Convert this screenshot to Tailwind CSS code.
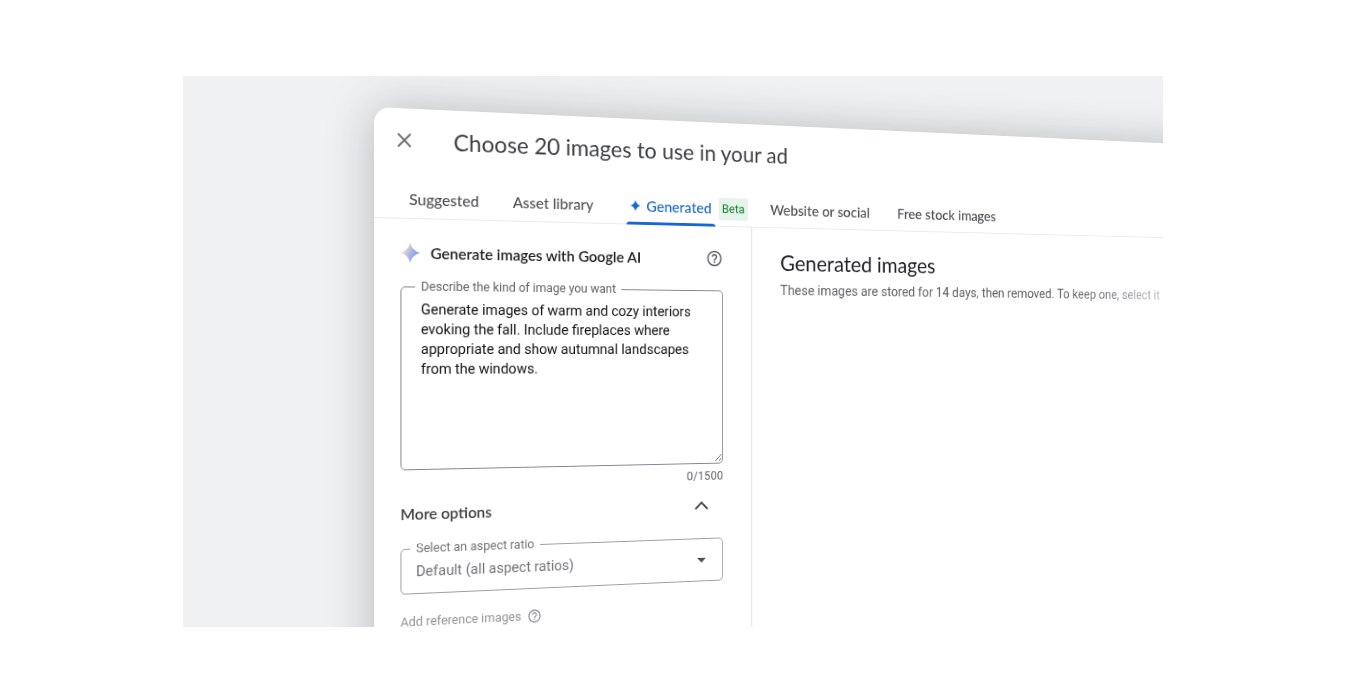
<!DOCTYPE html>
<html lang="en">
<head>
<meta charset="utf-8">
<meta name="viewport" content="width=device-width, initial-scale=1">
<title>Choose 20 images to use in your ad</title>
<script src="https://cdn.jsdelivr.net/npm/@tailwindcss/browser@4"></script>
</head>
<body class="bg-white py-[76px] pr-[195px] pl-[183px] font-[Roboto,sans-serif] text-[#3c4043]">
<main class="relative aspect-[980/551] overflow-hidden bg-[#eff1f3]">
  <!-- Perspective stage: the dialog recedes towards the right -->
  <div class="ml-[191px] pt-[31px] [perspective:952px] [perspective-origin:0_279px]">
    <section role="dialog" aria-labelledby="dialog-title" class="flex h-[640px] w-[130%] origin-top-left rotate-y-[10deg] flex-col rounded-[16px] bg-white shadow-[0_2px_48px_rgba(60,64,62,0.32)]">
      <header class="flex h-[66px] items-start gap-10 pt-[21px] pl-[20px]">
        <button type="button" aria-label="Close" class="flex size-[22px] items-center justify-center text-[#6b6f74]">
          <svg class="size-[16px]" viewBox="0 0 16 16" fill="none" stroke="currentColor" stroke-width="1.800"><path d="M1.500 1.500l13 13M14.500 1.500l-13 13"/></svg>
        </button>
        <h1 id="dialog-title" class="font-[Lato,sans-serif] text-[24px] leading-[22px] whitespace-nowrap">Choose 20 images to use in your ad</h1>
      </header>

      <nav class="flex h-[45px] shrink-0 items-stretch border-b border-[#e8eaed] pl-[36px] font-[Lato,sans-serif] text-[16px] font-medium whitespace-nowrap text-[#4c5055]">
        <a href="#suggested" class="mr-[36px] flex items-center pt-[5px]">Suggested</a>
        <a href="#library" class="mr-[37px] flex items-center pt-[5px]">Asset library</a>
        <a href="#generated" aria-current="page" class="relative flex items-center gap-[6px] px-1 pt-[5px] text-[#1967d2]">
          <svg class="size-[12px]" viewBox="0 0 12 12" fill="currentColor"><path d="M6 0.300Q7.200 4.800 11.700 6 7.200 7.200 6 11.700 4.800 7.200 0.300 6 4.800 4.800 6 0.300Z"/></svg>
          Generated
          <span class="absolute inset-x-0 -bottom-px h-[3px] rounded-t-[3px] bg-[#1967d2]"></span>
        </a>
        <span class="mt-[14px] ml-1 flex h-6 items-center rounded-xs bg-[#e6f4ea] px-1 font-[Roboto,sans-serif] text-[13px] font-normal text-[#188038]">Beta</span>
        <a href="#website" class="mr-[34px] ml-[26px] flex items-center pt-[5px]">Website or social</a>
        <a href="#stock" class="flex items-center pt-[5px]">Free stock images</a>
      </nav>

      <div class="flex grow">
        <form class="flex w-[413px] shrink-0 flex-col border-r border-[#dadce0] pr-[33px] pl-[27px]">
          <div class="mt-[22px] flex h-6 items-center">
            <svg class="size-[20px]" viewBox="0 0 20 20"><defs><linearGradient id="spark" x1="0" y1="0.2" x2="1" y2="0.7"><stop offset="0.15" stop-color="#fbe3ae"/><stop offset="0.45" stop-color="#b9bfe6"/><stop offset="1" stop-color="#6b8df2"/></linearGradient></defs><path fill="url(#spark)" d="M10 0Q12.200 7.800 20 10 12.200 12.200 10 20 7.800 12.200 0 10 7.800 7.800 10 0Z"/></svg>
            <h2 class="ml-[11px] font-[Lato,sans-serif] text-[16px] font-semibold text-[#202124]">Generate images with Google AI</h2>
            <button type="button" aria-label="Help" class="ml-auto text-[#5f6368]">
              <svg class="size-[20px]" viewBox="0 0 24 24" fill="currentColor"><path d="M11 18h2v-2h-2v2zm1-16C6.480 2 2 6.480 2 12s4.480 10 10 10 10-4.480 10-10S17.520 2 12 2zm0 18c-4.410 0-8-3.590-8-8s3.590-8 8-8 8 3.590 8 8-3.590 8-8 8zm0-14c-2.210 0-4 1.790-4 4h2c0-1.100.9-2 2-2s2 .9 2 2c0 2-3 1.750-3 5h2c0-2.250 3-2.500 3-5 0-2.210-1.790-4-4-4z"/></svg>
            </button>
          </div>

          <fieldset class="mt-[14px] h-[193px] rounded-[5px] border border-[#80868b] pl-[14px]">
            <legend class="px-[6px] text-[13px] leading-4 text-[#5f6368]"><label for="prompt">Describe the kind of image you want</label></legend>
            <textarea id="prompt" class="block h-[175px] w-full resize-y pt-[5px] pr-3 pl-[6px] text-[15px] leading-5 text-[#111214] outline-none">Generate images of warm and cozy interiors evoking the fall. Include fireplaces where appropriate and show autumnal landscapes from the windows.</textarea>
          </fieldset>
          <p class="mt-1 text-right text-[13px] leading-[18px] text-[#5f6368]">0/1500</p>

          <div class="mt-[9px] flex h-[26px] items-center justify-between pr-[17px] font-[Lato,sans-serif] text-[16px] font-semibold text-[#3c4043]">
            <h3>More options</h3>
            <button type="button" aria-label="Collapse more options"><svg class="h-[10px] w-[16px]" viewBox="0 0 16 10" fill="none" stroke="currentColor" stroke-width="1.800"><path d="M1 9l7-7 7 7"/></svg></button>
          </div>

          <fieldset class="mt-[14px] h-[54px] rounded-[5px] border border-[#80868b]/80 pl-[9px]">
            <legend class="px-[6px] text-[13px] leading-4 text-[#70757a]"><label for="ratio">Select an aspect ratio</label></legend>
            <div class="relative flex h-[30px] items-center">
              <select id="ratio" class="w-full appearance-none pl-[6px] text-[15px] text-[#70757a] outline-none"><option>Default (all aspect ratios)</option></select>
              <svg class="pointer-events-none absolute right-[19px] h-[5px] w-[10px] text-[#4c5055]" viewBox="0 0 10 5" fill="currentColor"><path d="M0 0h10L5 5z"/></svg>
            </div>
          </fieldset>

          <div class="mt-[19px] flex items-center gap-[6px] text-[13px] leading-[18px] text-[#8f9499]">
            Add reference images
            <svg class="size-[16px]" viewBox="0 0 24 24" fill="currentColor"><path d="M11 18h2v-2h-2v2zm1-16C6.480 2 2 6.480 2 12s4.480 10 10 10 10-4.480 10-10S17.520 2 12 2zm0 18c-4.410 0-8-3.590-8-8s3.590-8 8-8 8 3.590 8 8-3.590 8-8 8zm0-14c-2.210 0-4 1.790-4 4h2c0-1.100.9-2 2-2s2 .9 2 2c0 2-3 1.750-3 5h2c0-2.250 3-2.500 3-5 0-2.210-1.790-4-4-4z"/></svg>
          </div>
        </form>

        <section class="pt-[21px] pl-[33px] whitespace-nowrap">
          <h2 class="font-[Lato,sans-serif] text-[24px] leading-8 text-[#202124]">Generated images</h2>
          <p class="mt-1 text-[15px] leading-5 text-[#5f6368]">These images are stored for 14 days, then removed. To keep one, select it</p>
        </section>
      </div>
    </section>
  </div>
  <!-- Soft fade at the right edge of the scene -->
  <div class="pointer-events-none absolute top-[200px] right-0 bottom-0 w-[90px] bg-gradient-to-r from-white/0 to-white/60"></div>
</main>
</body>
</html>
